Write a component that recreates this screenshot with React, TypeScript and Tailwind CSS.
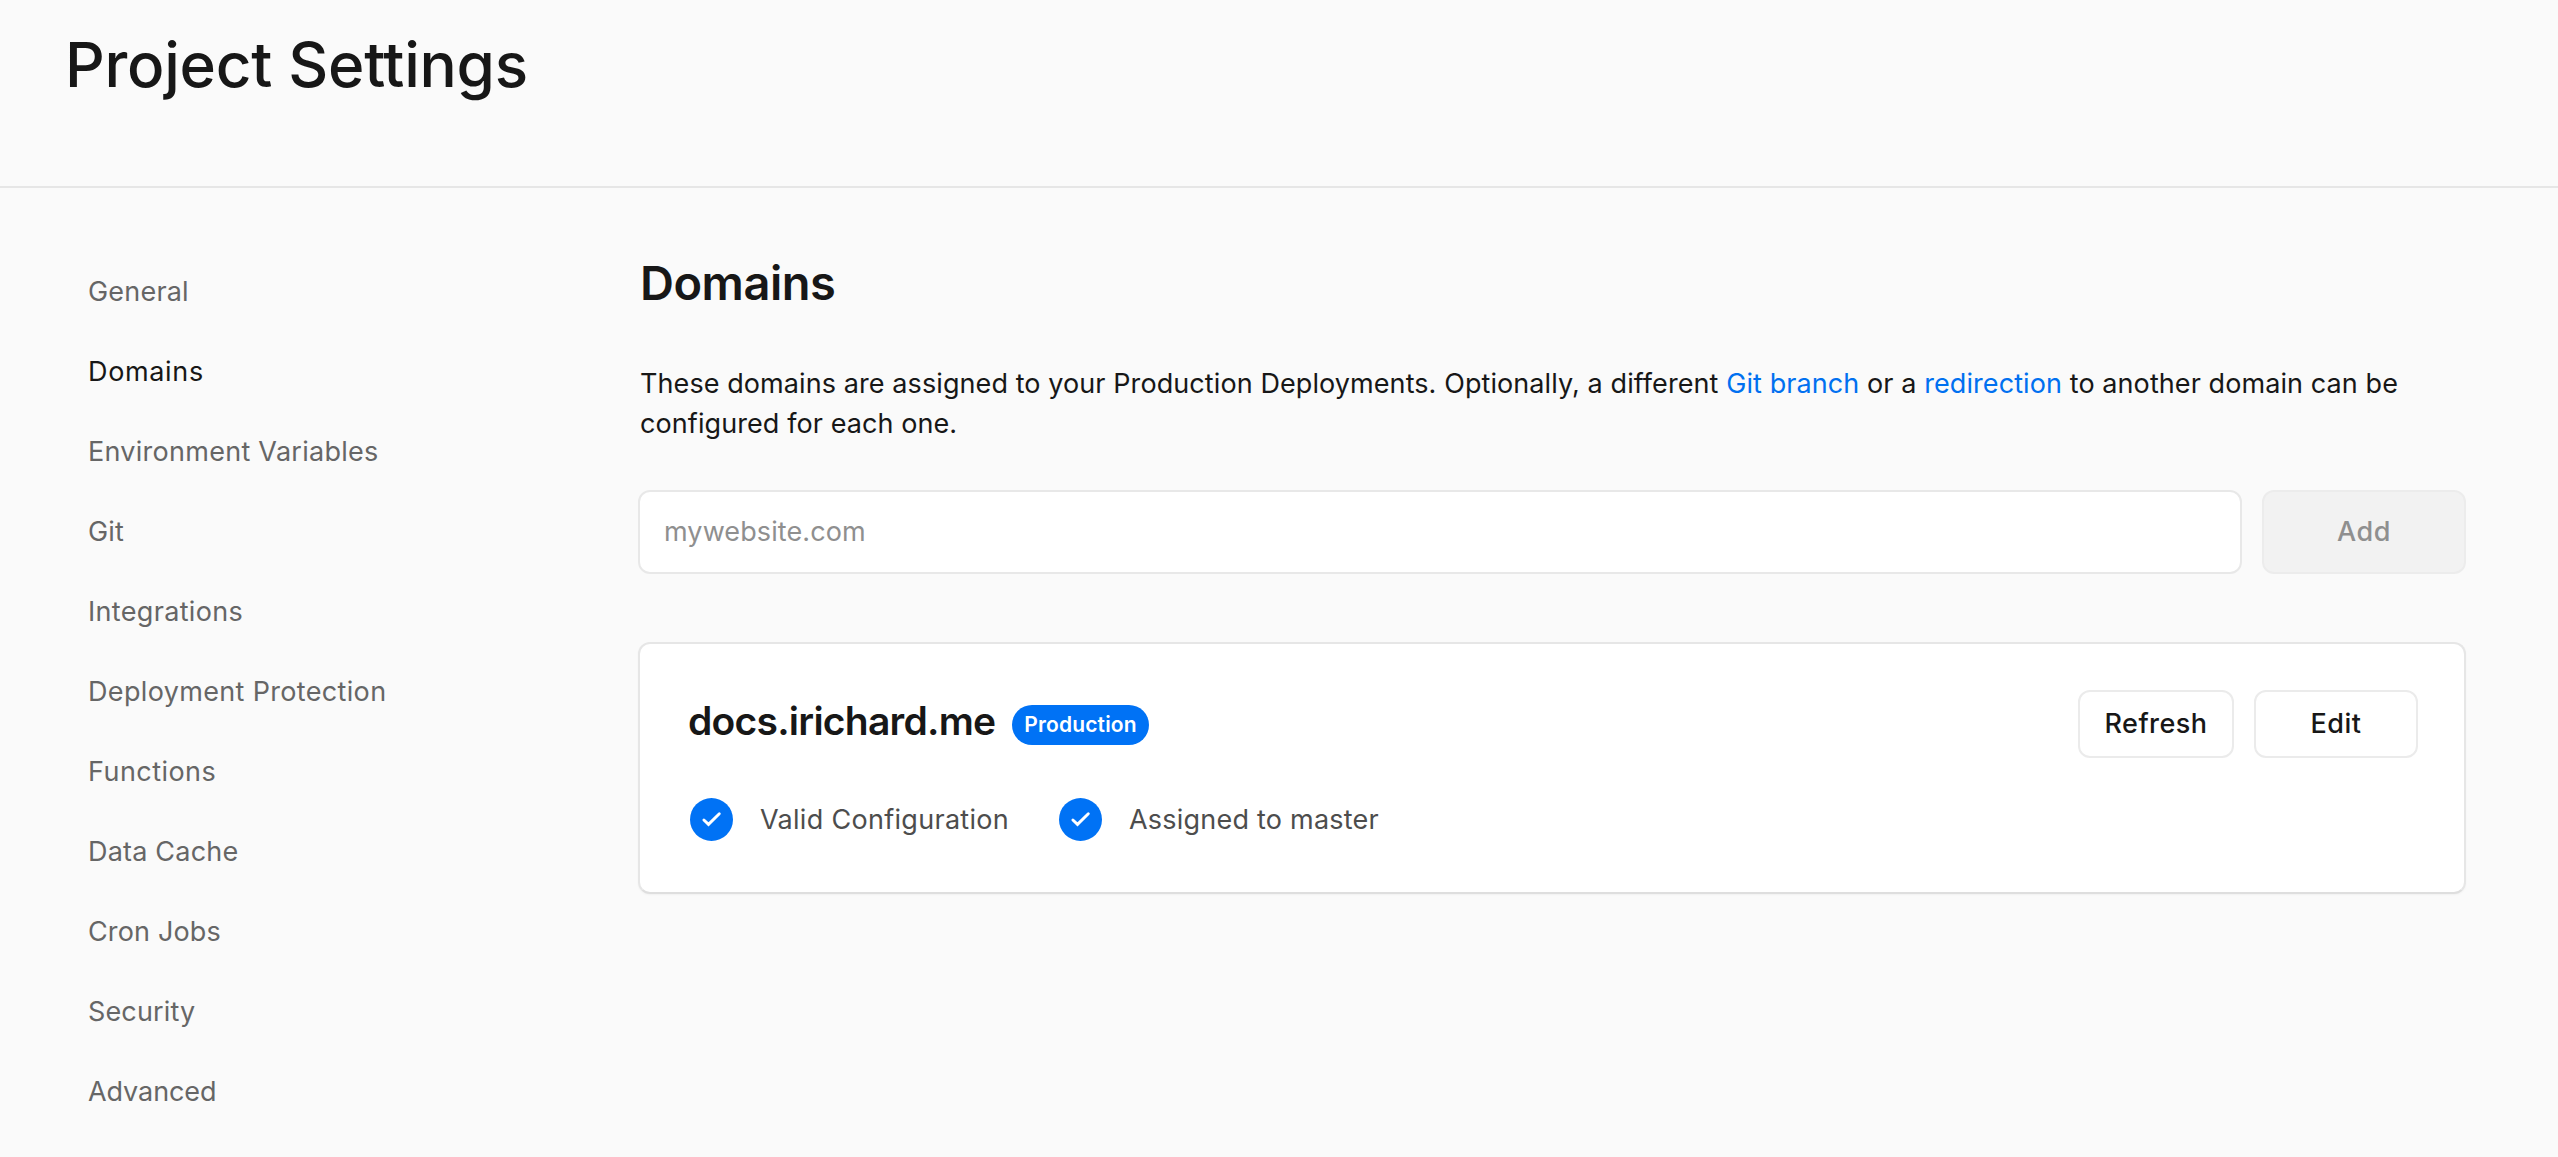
type NavItem = { label: string; tracking: string; active?: boolean };

const navItems: NavItem[] = [
  { label: "General", tracking: "tracking-[0.2px]" },
  { label: "Domains", tracking: "tracking-[0.65px]", active: true },
  { label: "Environment Variables", tracking: "tracking-[0.27px]" },
  { label: "Git", tracking: "tracking-[0.1px]" },
  { label: "Integrations", tracking: "tracking-[0.32px]" },
  { label: "Deployment Protection", tracking: "tracking-[0.34px]" },
  { label: "Functions", tracking: "tracking-[0.45px]" },
  { label: "Data Cache", tracking: "tracking-[0.2px]" },
  { label: "Cron Jobs", tracking: "tracking-[0.15px]" },
  { label: "Security", tracking: "tracking-[0.15px]" },
  { label: "Advanced", tracking: "tracking-[-0.09px]" },
];

function CheckCircle() {
  return (
    <svg width="43" height="43" viewBox="0 0 43 43" fill="none" className="shrink-0">
      <circle cx="21.5" cy="21.5" r="21.5" fill="#0072f5" />
      <path
        d="M13.9 22 L18.5 26.4 L29.3 15.8"
        stroke="white"
        strokeWidth="2.9"
        strokeLinecap="round"
        strokeLinejoin="miter"
      />
    </svg>
  );
}

function Status({ label, className }: { label: string; className: string }) {
  return (
    <div className={`flex h-[43px] items-center gap-[27px] ${className}`}>
      <CheckCircle />
      <span className="whitespace-nowrap leading-[44px] text-[#4d4d4d]">{label}</span>
    </div>
  );
}

export default function App() {
  return (
    <div className="min-h-[1157px] w-full overflow-hidden bg-[#fafafa] font-['Inter',sans-serif] text-[27px] text-[#171717]">
      <header className="h-[188px] border-b-2 border-[#e6e6e6] pl-[65px] pt-[33px]">
        <h1 className="text-[62px] font-medium leading-[64px] tracking-[-0.27px]">Project Settings</h1>
      </header>

      <div className="flex">
        <nav className="flex w-[638px] shrink-0 flex-col pl-[88px] pt-16">
          {navItems.map((item) => (
            <a
              key={item.label}
              className={`h-20 leading-[80px] ${item.tracking} ${item.active ? "text-[#171717]" : "text-[#666666]"}`}
            >
              {item.label}
            </a>
          ))}
        </nav>

        <main className="flex w-[1828px] flex-col pt-[67px]">
          <h2 className="pl-[2px] text-[47px] font-semibold leading-[56px] tracking-[-0.49px]">Domains</h2>

          <p className="mt-[53px] pl-[2px] leading-[40px] tracking-[0.085px]">
            These domains are assigned to your Production Deployments. Optionally, a different{" "}
            <a className="text-[#0070f0]">Git branch</a> or a <a className="text-[#0070f0]">redirection</a> to
            another domain can be
            <br />
            configured for each one.
          </p>

          <form className="mt-[46px] flex h-[84px] gap-5">
            <input
              type="text"
              placeholder="mywebsite.com"
              className="w-[1604px] rounded-xl border-2 border-[#e8e8e8] bg-white px-6 tracking-[0.1px] placeholder:text-[#8f8f8f]"
            />
            <button
              type="button"
              disabled
              className="flex-1 rounded-xl border-2 border-[#ececec] bg-[#f2f2f2] font-medium tracking-[0.5px] text-[#8f8f8f]"
            >
              Add
            </button>
          </form>

          <section className="mt-[68px] h-[252px] rounded-xl border-2 border-[#e6e6e6] border-b-[#dedede] bg-white pl-12 pr-[46px] pt-[46px] shadow-[0_1px_2px_rgba(0,0,0,0.04)]">
            <div className="flex items-start">
              <h3 className="w-[324px] whitespace-nowrap text-[39px] font-semibold leading-[62px] tracking-[-0.76px]">
                docs.irichard.me
              </h3>
              <span className="mt-[15px] flex h-10 w-[137px] items-center justify-center rounded-full bg-[#0072f5] text-[21px] font-semibold leading-[38px] tracking-[0.15px] text-white">
                Production
              </span>
              <div className="ml-auto flex gap-5">
                <button
                  type="button"
                  className="h-[68px] w-[156px] rounded-xl border-2 border-[#ebebeb] bg-white font-medium tracking-[0.45px]"
                >
                  Refresh
                </button>
                <button
                  type="button"
                  className="h-[68px] w-[164px] rounded-xl border-2 border-[#ebebeb] bg-white font-medium tracking-[0.45px]"
                >
                  Edit
                </button>
              </div>
            </div>

            <div className="mt-10 flex pl-[2px]">
              <Status label="Valid Configuration" className="w-[369px] tracking-[0.3px]" />
              <Status label="Assigned to master" className="tracking-[0.22px]" />
            </div>
          </section>
        </main>
      </div>
    </div>
  );
}
